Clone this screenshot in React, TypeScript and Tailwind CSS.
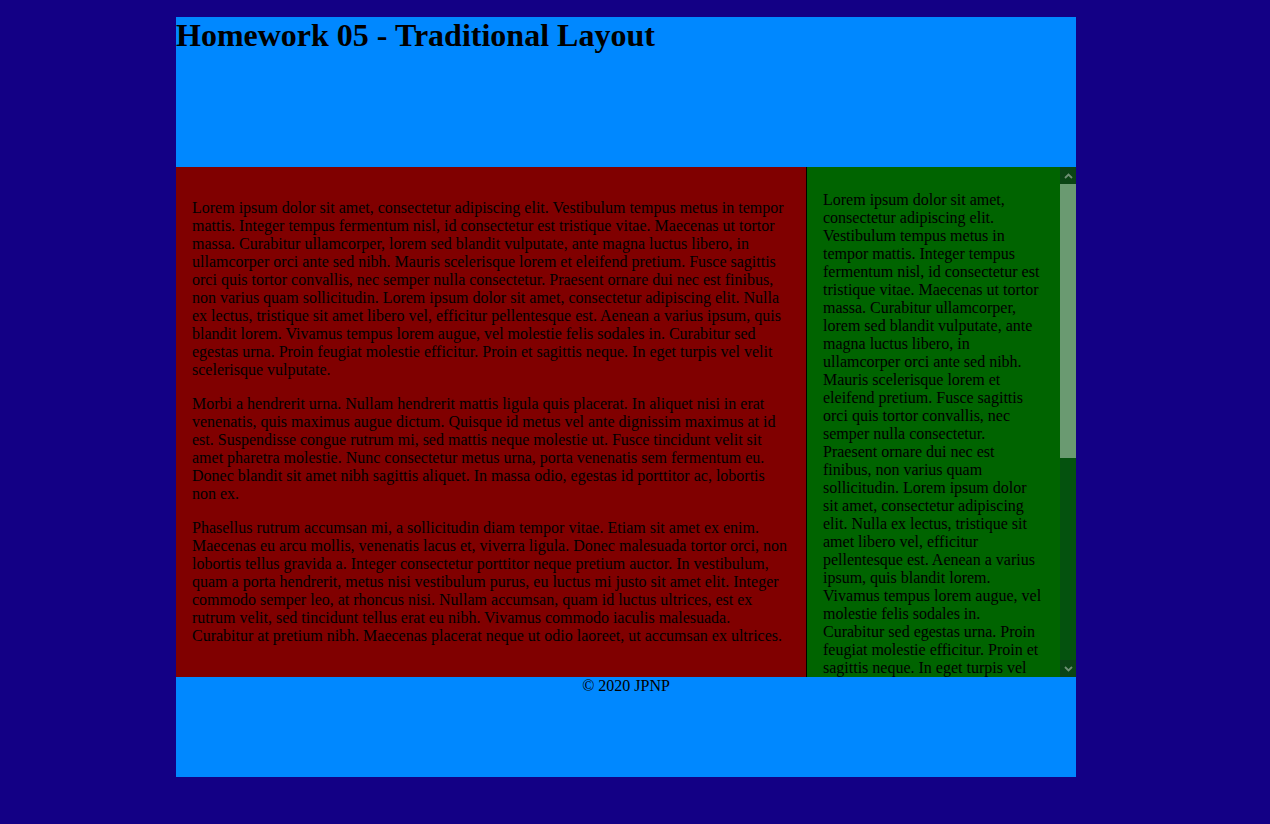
const loremOne =
  "Lorem ipsum dolor sit amet, consectetur adipiscing elit. Vestibulum tempus metus in tempor mattis. Integer tempus fermentum nisl, id consectetur est tristique vitae. Maecenas ut tortor massa. Curabitur ullamcorper, lorem sed blandit vulputate, ante magna luctus libero, in ullamcorper orci ante sed nibh. Mauris scelerisque lorem et eleifend pretium. Fusce sagittis orci quis tortor convallis, nec semper nulla consectetur. Praesent ornare dui nec est finibus, non varius quam sollicitudin. Lorem ipsum dolor sit amet, consectetur adipiscing elit. Nulla ex lectus, tristique sit amet libero vel, efficitur pellentesque est. Aenean a varius ipsum, quis blandit lorem. Vivamus tempus lorem augue, vel molestie felis sodales in. Curabitur sed egestas urna. Proin feugiat molestie efficitur. Proin et sagittis neque. In eget turpis vel velit scelerisque vulputate.";

const loremTwo =
  "Morbi a hendrerit urna. Nullam hendrerit mattis ligula quis placerat. In aliquet nisi in erat venenatis, quis maximus augue dictum. Quisque id metus vel ante dignissim maximus at id est. Suspendisse congue rutrum mi, sed mattis neque molestie ut. Fusce tincidunt velit sit amet pharetra molestie. Nunc consectetur metus urna, porta venenatis sem fermentum eu. Donec blandit sit amet nibh sagittis aliquet. In massa odio, egestas id porttitor ac, lobortis non ex.";

const loremThree =
  "Phasellus rutrum accumsan mi, a sollicitudin diam tempor vitae. Etiam sit amet ex enim. Maecenas eu arcu mollis, venenatis lacus et, viverra ligula. Donec malesuada tortor orci, non lobortis tellus gravida a. Integer consectetur porttitor neque pretium auctor. In vestibulum, quam a porta hendrerit, metus nisi vestibulum purus, eu luctus mi justo sit amet elit. Integer commodo semper leo, at rhoncus nisi. Nullam accumsan, quam id luctus ultrices, est ex rutrum velit, sed tincidunt tellus erat eu nibh. Vivamus commodo iaculis malesuada. Curabitur at pretium nibh. Maecenas placerat neque ut odio laoreet, ut accumsan ex ultrices.";

function Chevron({ up }: { up?: boolean }) {
  return (
    <svg width="9" height="6" viewBox="0 0 9 6" className={up ? "" : "rotate-180"}>
      <path d="M1 5 L4.5 1.5 L8 5" fill="none" stroke="#6f8f74" strokeWidth="1.8" />
    </svg>
  );
}

// fake scrollbar, the headless browser hides the native one
function Scrollbar() {
  return (
    <div className="flex w-[16px] shrink-0 flex-col bg-[#04520e]">
      <div className="flex h-[17px] items-center justify-center bg-[#0a4414]">
        <Chevron up />
      </div>
      <div className="h-[274px] bg-[#6a9a71]" />
      <div className="flex-1" />
      <div className="flex h-[17px] items-center justify-center bg-[#0a4414]">
        <Chevron />
      </div>
    </div>
  );
}

export default function App() {
  return (
    <div className="min-h-[824px] bg-[#130085] pt-[17px] font-['Liberation_Serif',serif] text-base text-black">
      <div className="ml-[176px] w-[900px]">
        {/* Header */}
        <header className="h-[150px] bg-[#0088ff]">
          <h1 className="text-[32px] font-bold leading-[37px]">Homework 05 - Traditional Layout</h1>
        </header>

        {/* Main + aside */}
        <div className="flex h-[510px]">
          <main className="w-[630px] bg-[#800000] px-4 pt-4">
            <p className="mt-4 leading-[18px]">{loremOne}</p>
            <p className="mt-4 leading-[18px]">{loremTwo}</p>
            <p className="mt-4 leading-[18px]">{loremThree}</p>
          </main>
          <aside className="flex w-[270px] border-l border-black bg-[#006400]">
            <div className="flex-1 overflow-hidden pl-4 pr-[18px] pt-6">
              <p className="leading-[18px]">{loremOne}</p>
              <p className="mt-4 leading-[18px]">{loremTwo}</p>
              <p className="mt-4 leading-[18px]">{loremThree}</p>
            </div>
            <Scrollbar />
          </aside>
        </div>

        {/* Footer */}
        <footer className="h-[100px] bg-[#0088ff] text-center leading-[18px]">© 2020 JPNP</footer>
      </div>
    </div>
  );
}
